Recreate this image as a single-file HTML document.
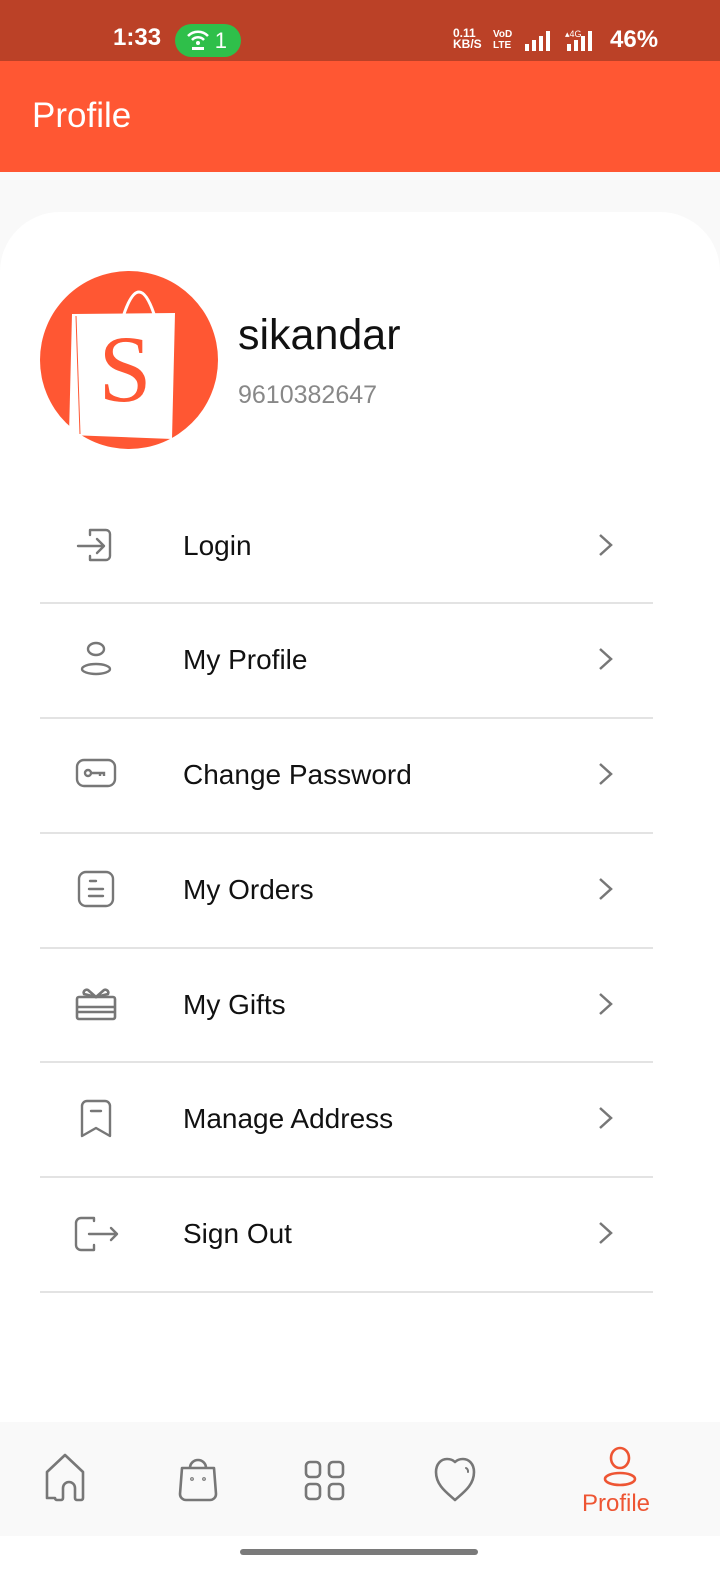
<!DOCTYPE html><html><head><style>
body{margin:0;width:720px;height:1584px;position:relative;background:#fff;font-family:"Liberation Sans",sans-serif;overflow:hidden}
.a{position:absolute}
.row{position:absolute;left:0;width:720px;height:115px}
.row .t{position:absolute;left:183px;top:0;line-height:115px;font-size:28px;color:#111}
.row .ic{position:absolute;left:72px;top:33px}
.row .ch{position:absolute;left:594px;top:44px}
.div{position:absolute;left:40px;width:613px;height:2px;background:#e3e3e3}
</style></head><body>
<div class="a" style="top:0;left:0;width:720px;height:61px;background:#bb4127"></div>
<div class="a" style="left:113px;top:24px;color:#fff;font-size:24px;font-weight:bold">1:33</div>
<div class="a" style="left:175px;top:24px;width:66px;height:33px;border-radius:17px;background:#2fbf4a;color:#fff;font-size:22px;line-height:33px;text-align:right;box-sizing:border-box;padding-right:14px">1</div>
<svg class="a" style="left:185px;top:28px" width="26" height="24" viewBox="0 0 26 24"><path d="M3 8a14 14 0 0 1 20 0M7 12a8 8 0 0 1 12 0" stroke="#fff" stroke-width="2.5" fill="none"/><circle cx="13" cy="15" r="2" fill="#fff"/><rect x="7" y="19" width="12" height="3" fill="#fff"/></svg>
<div class="a" style="left:453px;top:28px;color:#fff;font-size:12px;font-weight:bold;line-height:11px">0.11<br>KB/S</div>
<div class="a" style="left:493px;top:29px;color:#fff;font-size:10px;font-weight:bold;line-height:11px">VoD<br>LTE</div>
<svg class="a" style="left:523px;top:28px" width="80" height="24"><g fill="#fff"><rect x="2" y="16" width="4" height="7"/><rect x="9" y="12" width="4" height="11"/><rect x="16" y="8" width="4" height="15"/><rect x="23" y="3" width="4" height="20"/><rect x="44" y="16" width="4" height="7"/><rect x="51" y="12" width="4" height="11"/><rect x="58" y="8" width="4" height="15"/><rect x="65" y="3" width="4" height="20"/></g><text x="42" y="9" fill="#fff" font-size="9" font-family="Liberation Sans">▴4G</text></svg>
<div class="a" style="left:610px;top:26px;color:#fff;font-size:24px;font-weight:bold">46%</div>
<div class="a" style="top:61px;left:0;width:720px;height:111px;background:#ff5733"></div>
<div class="a" style="left:32px;top:96px;color:#fff;font-size:35px">Profile</div>
<div class="a" style="top:172px;left:0;width:720px;height:1250px;background:#f9f9f9"></div>
<div class="a" style="top:212px;left:0;width:720px;height:1230px;background:#fff;border-radius:60px 60px 0 0"></div>
<div class="a" style="left:40px;top:271px;width:178px;height:178px;border-radius:50%;background:#ff5733"></div>
<svg class="a" style="left:40px;top:271px" width="178" height="178" viewBox="0 0 178 178"><path d="M84 43q15-44 30 0" stroke="#fff" stroke-width="3" fill="none"/><path d="M32 43l103-1 -3 126-103-4z" fill="#fff"/><path d="M36 45l4 118" stroke="#ff5733" stroke-width="1"/><text x="85" y="130" font-family="Liberation Serif" font-size="95" fill="#ff5733" text-anchor="middle">S</text></svg>
<div class="a" style="left:238px;top:311px;font-size:43px;color:#111">sikandar</div>
<div class="a" style="left:238px;top:381px;font-size:25px;color:#888">9610382647</div>

<div class="row" style="top:488px"><svg class="ic" width="48" height="48" viewBox="0 0 48 48" fill="none" stroke="#777" stroke-width="2.4" stroke-linecap="round" stroke-linejoin="round"><path d="M6 25h26M25 18l7 7-7 7M18 14V9h16a4 4 0 0 1 4 4v22a4 4 0 0 1-4 4H18v-4"/></svg><div class="t">Login</div><svg class="ch" width="24" height="26"><path d="M6 3l11 10-11 10" stroke="#777" stroke-width="2.5" fill="none"/></svg></div>
<div class="div" style="top:602px"></div>
<div class="row" style="top:602px"><svg class="ic" width="48" height="48" viewBox="0 0 48 48" fill="none" stroke="#777" stroke-width="2.4"><ellipse cx="24" cy="14" rx="8" ry="6"/><ellipse cx="24" cy="34" rx="14" ry="5"/></svg><div class="t">My Profile</div><svg class="ch" width="24" height="26"><path d="M6 3l11 10-11 10" stroke="#777" stroke-width="2.5" fill="none"/></svg></div>
<div class="div" style="top:717px"></div>
<div class="row" style="top:717px"><svg class="ic" width="48" height="48" viewBox="0 0 48 48" fill="none" stroke="#777" stroke-width="2.4"><rect x="5" y="10" width="38" height="26" rx="7"/><circle cx="16" cy="23" r="3"/><path d="M19 23h13v3M28 23v3"/></svg><div class="t">Change Password</div><svg class="ch" width="24" height="26"><path d="M6 3l11 10-11 10" stroke="#777" stroke-width="2.5" fill="none"/></svg></div>
<div class="div" style="top:832px"></div>
<div class="row" style="top:832px"><svg class="ic" width="48" height="48" viewBox="0 0 48 48" fill="none" stroke="#777" stroke-width="2.4" stroke-linecap="round"><rect x="7" y="7" width="34" height="34" rx="7"/><path d="M18 16h6M17 24h14M17 31h14"/></svg><div class="t">My Orders</div><svg class="ch" width="24" height="26"><path d="M6 3l11 10-11 10" stroke="#777" stroke-width="2.5" fill="none"/></svg></div>
<div class="div" style="top:947px"></div>
<div class="row" style="top:947px"><svg class="ic" width="48" height="48" viewBox="0 0 48 48" fill="none" stroke="#777" stroke-width="2.6"><rect x="5" y="17" width="38" height="22" rx="2"/><path d="M5 27h38M5 32h38"/><path d="M24 17l-8-7a3 3 0 0 0-4 4l12 3 12-3a3 3 0 0 0-4-4z"/></svg><div class="t">My Gifts</div><svg class="ch" width="24" height="26"><path d="M6 3l11 10-11 10" stroke="#777" stroke-width="2.5" fill="none"/></svg></div>
<div class="div" style="top:1061px"></div>
<div class="row" style="top:1061px"><svg class="ic" width="48" height="48" viewBox="0 0 48 48" fill="none" stroke="#777" stroke-width="2.4" stroke-linejoin="round"><path d="M10 12a5 5 0 0 1 5-5h18a5 5 0 0 1 5 5v30l-14-8-14 8z"/><path d="M19 17h10" stroke-linecap="round"/></svg><div class="t">Manage Address</div><svg class="ch" width="24" height="26"><path d="M6 3l11 10-11 10" stroke="#777" stroke-width="2.5" fill="none"/></svg></div>
<div class="div" style="top:1176px"></div>
<div class="row" style="top:1176px"><svg class="ic" width="48" height="48" viewBox="0 0 48 48" fill="none" stroke="#777" stroke-width="2.4" stroke-linecap="round" stroke-linejoin="round"><path d="M22 12V9H9a5 5 0 0 0-5 5v22a5 5 0 0 0 5 5h13v-5M17 25h28M39 19l6 6-6 6"/></svg><div class="t">Sign Out</div><svg class="ch" width="24" height="26"><path d="M6 3l11 10-11 10" stroke="#777" stroke-width="2.5" fill="none"/></svg></div>
<div class="div" style="top:1291px"></div>

<div class="a" style="top:1422px;left:0;width:720px;height:114px;background:#f9f9f9"></div>
<svg class="a" style="left:0;top:1422px" width="720" height="114" fill="none" stroke="#777" stroke-width="2.6" stroke-linejoin="round" stroke-linecap="round">
<path d="M47 76v-26l18-17 18 17v26a2 2 0 0 1-2 2h-4a2 2 0 0 1-2-2v-10a6 6 0 0 0-12 0v10a2 2 0 0 1-2 2h-4a2 2 0 0 1-2-2z"/>
<path d="M182 46h32l2 26a6 6 0 0 1-6 6h-24a6 6 0 0 1-6-6z M190 46a8 8 0 0 1 16 0"/>
<circle cx="192" cy="57" r="0.6"/><circle cx="204" cy="57" r="0.6"/>
<rect x="306" y="40" width="14" height="15" rx="4"/><rect x="329" y="40" width="14" height="15" rx="4"/><rect x="306" y="62" width="14" height="15" rx="4"/><rect x="329" y="62" width="14" height="15" rx="4"/>
<path d="M455 78c-9-8-19-15-19-28 0-8 5-13 11-13 3 0 6 1 8 3 2-2 5-3 8-3 6 0 11 5 11 13 0 13-10 20-19 28z"/>
<path d="M466 46a4 4 0 0 1 2 4" stroke-width="2"/>
<g stroke="#ee5533"><ellipse cx="620" cy="36" rx="9" ry="10"/><ellipse cx="620" cy="57" rx="15" ry="6"/></g>
</svg>
<div class="a" style="left:582px;top:1490px;color:#ee5533;font-size:24px">Profile</div>
<div class="a" style="left:240px;top:1549px;width:238px;height:6px;border-radius:3px;background:#7a7a7a"></div>
</body></html>
